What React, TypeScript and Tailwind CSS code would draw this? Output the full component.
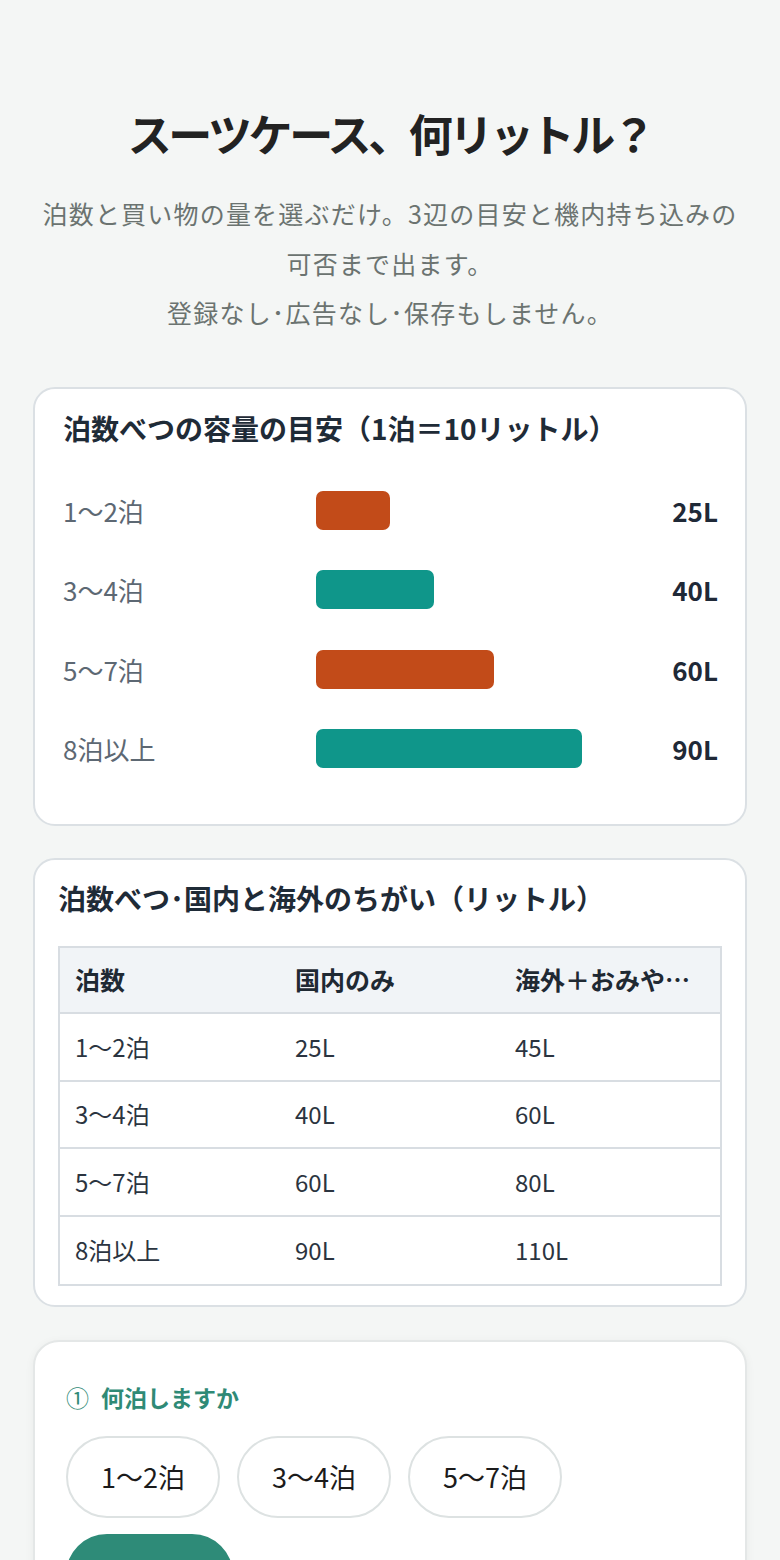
const nights = [
  { label: "1〜2泊", liters: 25, color: "bg-[#c24b19]" },
  { label: "3〜4泊", liters: 40, color: "bg-[#0f968a]" },
  { label: "5〜7泊", liters: 60, color: "bg-[#c24b19]" },
  { label: "8泊以上", liters: 90, color: "bg-[#0f968a]" },
];

const tableRows = [
  ["1〜2泊", "25L", "45L"],
  ["3〜4泊", "40L", "60L"],
  ["5〜7泊", "60L", "80L"],
  ["8泊以上", "90L", "110L"],
];

const nightOptions = ["1〜2泊", "3〜4泊", "5〜7泊", "8泊以上"];

function CapacityChart() {
  return (
    <section className="mt-[49px] rounded-[22px] border-2 border-[#dbe0e4] bg-white pl-[28px] pr-[27px] pt-[21px] pb-[56px]">
      <h2 className="text-[28px] font-bold leading-[36px] text-[#1f2b37]">
        泊数べつの容量の目安（1泊＝10リットル）
      </h2>
      <div className="mt-[45px] flex flex-col gap-[40.5px]">
        {nights.map((n) => (
          <div key={n.label} className="flex h-[39px] items-center">
            <span className="w-[253px] text-[26px] text-[#5d6873]">{n.label}</span>
            <div className="h-[39px] w-[296px]">
              <div
                className={`h-full rounded-[7px] ${n.color}`}
                style={{ width: `${n.liters}%` }}
              />
            </div>
            <span className="flex-1 text-right text-[26px] font-bold text-[#1f2937]">
              {n.liters}L
            </span>
          </div>
        ))}
      </div>
    </section>
  );
}

function CompareTable() {
  return (
    <section className="mt-[32px] rounded-[22px] border-2 border-[#dbe0e4] bg-white px-[23px] pt-[20px] pb-[19px]">
      <h2 className="text-[28px] font-bold leading-[36px] text-[#1f2b37]">
        泊数べつ･国内と海外のちがい（リットル）
      </h2>
      <div className="mt-[30px] border-2 border-[#d8dde2]">
        <div className="grid h-[66px] grid-cols-3 items-center border-b-2 border-[#d8dde2] bg-[#f1f4f7] text-[25px] font-bold text-[#1f2933]">
          <span className="px-[15px]">泊数</span>
          <span className="px-[15px]">国内のみ</span>
          <span className="px-[15px]">
            <span className="block w-[178px] truncate">海外＋おみやげ多め</span>
          </span>
        </div>
        {tableRows.map((r, i) => (
          <div
            key={r[0]}
            className={`grid h-[67.5px] grid-cols-3 items-center text-[24px] text-[#2b3440] ${
              i < tableRows.length - 1 ? "border-b-2 border-[#d8dde2]" : ""
            }`}
          >
            {r.map((c) => (
              <span key={c} className="px-[15px]">
                {c}
              </span>
            ))}
          </div>
        ))}
      </div>
    </section>
  );
}

function NightPicker() {
  return (
    <section className="mt-[33px] rounded-[26px] border-2 border-[#e4e7e7] bg-white px-[31px] pt-[40px] pb-[40px] shadow-[0_2px_10px_rgba(0,0,0,0.05)]">
      <h3 className="flex items-center text-[23px] font-bold leading-[30px] text-[#2f8a76]">
        <span className="mr-[12px] font-normal">①</span>
        何泊しますか
      </h3>
      <div className="mt-[24px] flex flex-wrap gap-x-[17px] gap-y-[16px]">
        {nightOptions.map((o, i) => (
          <button
            key={o}
            className={`h-[82px] rounded-full border-2 px-[33px] text-[27px] ${
              i === 3
                ? "border-[#2e8b78] bg-[#2e8b78] font-bold text-white"
                : "border-[#dde2e2] bg-white text-[#1b1b1b]"
            }`}
          >
            {o}
          </button>
        ))}
      </div>
    </section>
  );
}

export default function App() {
  return (
    <div
      className="min-h-screen bg-[#f4f6f5] px-[33px] pt-[103px] pb-[60px]"
      style={{ fontFamily: '"Noto Sans CJK JP", "Noto Sans", sans-serif' }}
    >
      <h1 className="text-center text-[44px] font-bold leading-[60px] tracking-[-3.4px] text-[#222]">
        スーツケース、何リットル？
      </h1>
      <p className="mt-[26px] text-center text-[25px] leading-[49.5px] tracking-[1.2px] text-[#6b7370]">
        泊数と買い物の量を選ぶだけ。3辺の目安と機内持ち込みの可否まで出ます。
        <br />
        登録なし･広告なし･保存もしません。
      </p>
      <CapacityChart />
      <CompareTable />
      <NightPicker />
    </div>
  );
}
